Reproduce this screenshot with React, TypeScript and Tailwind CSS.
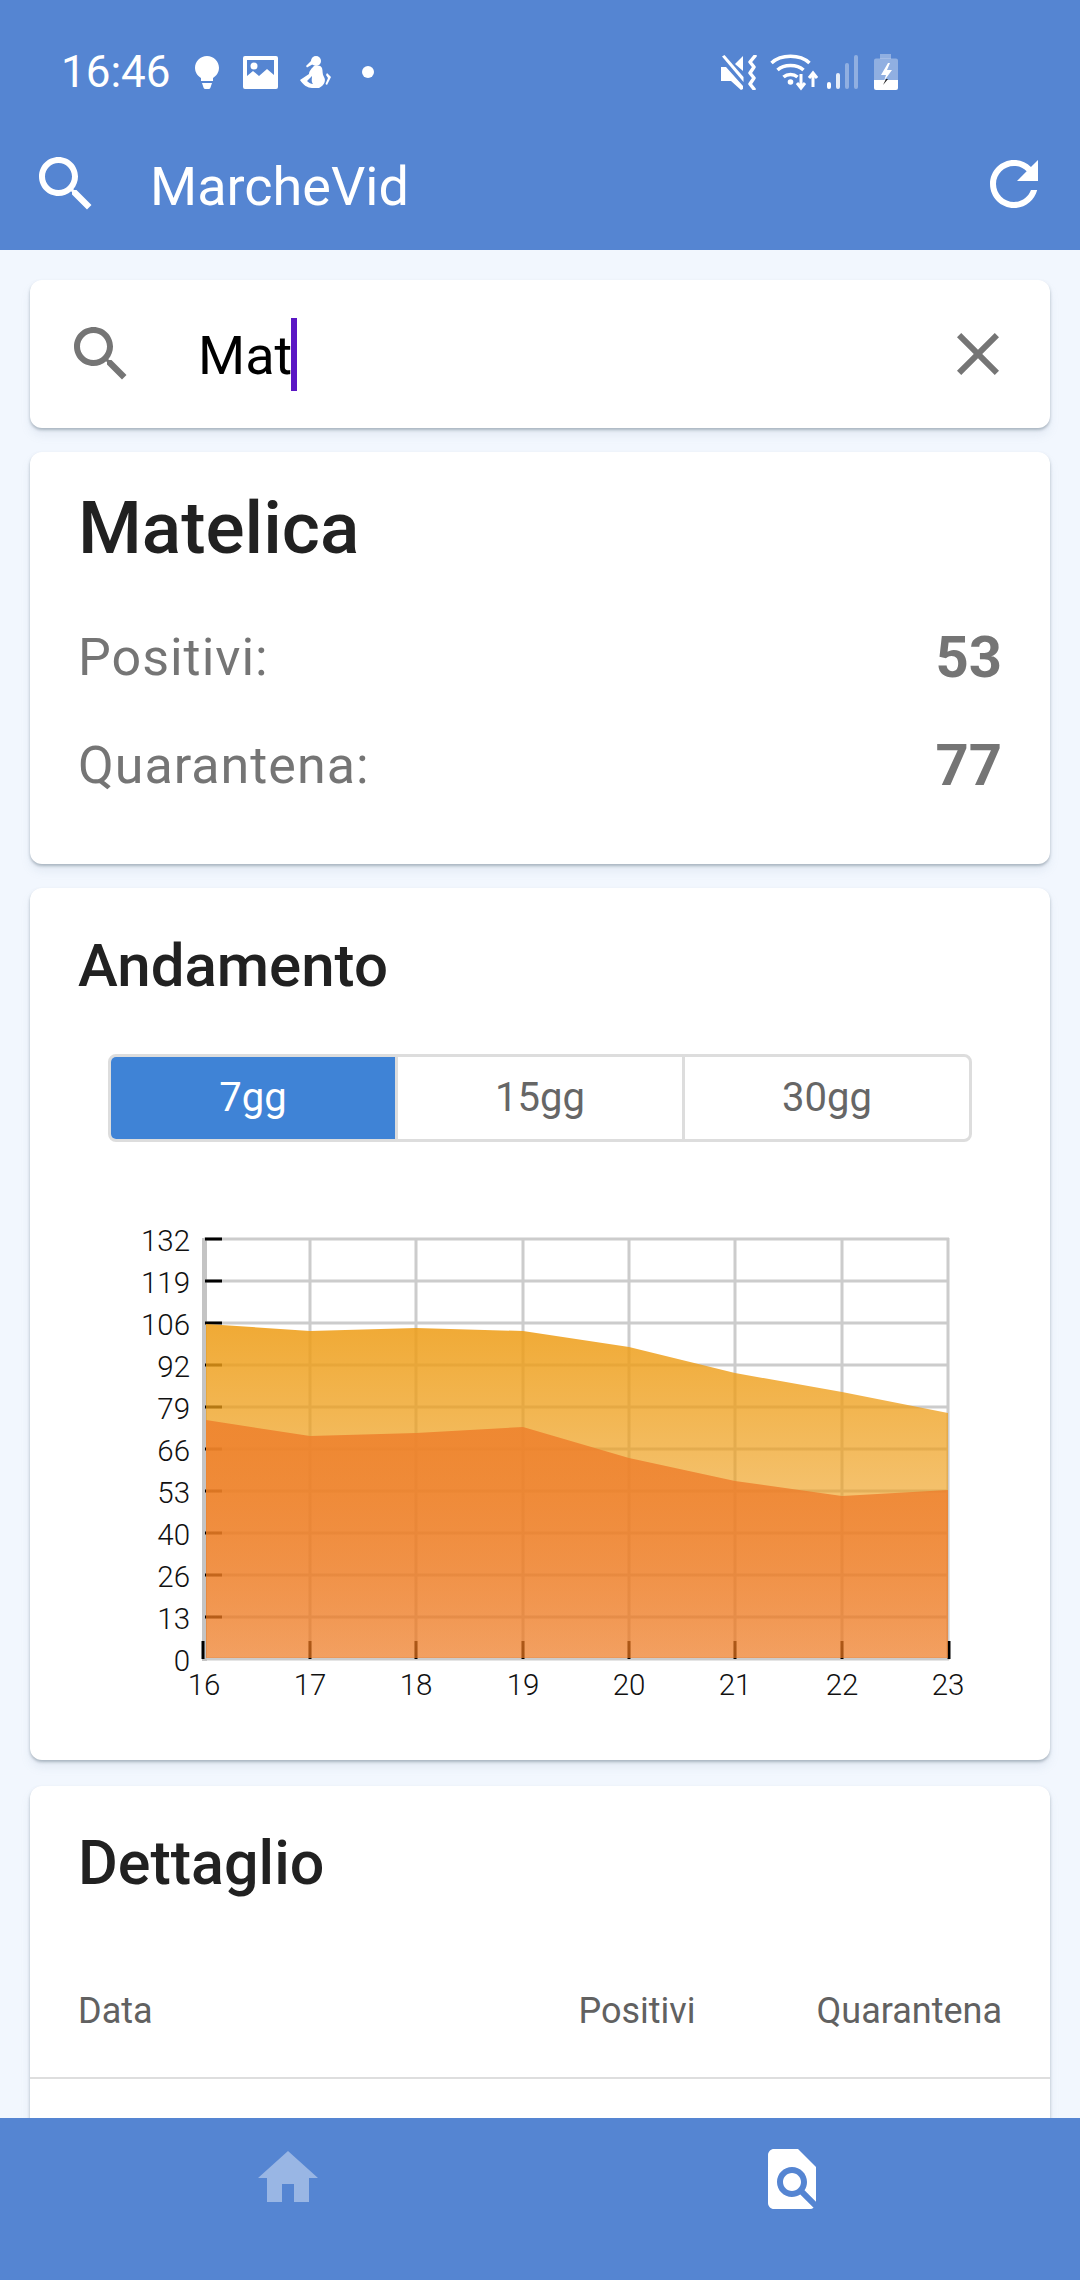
const SEARCH = "M15.5 14h-.79l-.28-.27C15.41 12.59 16 11.11 16 9.5 16 5.91 13.09 3 9.5 3S3 5.91 3 9.5 5.91 16 9.5 16c1.61 0 3.09-.59 4.23-1.57l.27.28v.79l5 4.99L20.49 19l-4.99-5zm-6 0C7.01 14 5 11.99 5 9.5S7.01 5 9.5 5 14 7.01 14 9.5 11.99 14 9.5 14z";
const REFRESH = "M17.65 6.35C16.2 4.9 14.21 4 12 4c-4.42 0-7.99 3.58-7.99 8s3.57 8 7.99 8c3.73 0 6.84-2.55 7.73-6h-2.08c-.82 2.33-3.04 4-5.65 4-3.31 0-6-2.69-6-6s2.69-6 6-6c1.66 0 3.14.69 4.22 1.78L13 11h7V4l-2.35 2.35z";
const CLOSE = "M19 6.41L17.59 5 12 10.59 6.41 5 5 6.41 10.59 12 5 17.59 6.41 19 12 13.41 17.59 19 19 17.59 13.41 12z";
const HOME = "M10 20v-6h4v6h5v-8h3L12 3 2 12h3v8z";
const FIND = "M20 19.59V8l-6-6H6c-1.1 0-1.99.9-1.99 2L4 20c0 1.1.89 2 1.99 2H18c.45 0 .85-.15 1.19-.4l-4.43-4.43c-.8.52-1.74.83-2.76.83-2.76 0-5-2.24-5-5s2.24-5 5-5 5 2.24 5 5c0 1.02-.31 1.96-.83 2.75L20 19.59zM9 13c0 1.66 1.34 3 3 3s3-1.34 3-3-1.34-3-3-3-3 1.34-3 3z";

function Icon({ d, className }: { d: string; className: string }) {
  return (
    <svg viewBox="0 0 24 24" className={className} fill="currentColor">
      <path d={d} />
    </svg>
  );
}

function Bulb() {
  return (
    <svg viewBox="0 0 24 33" className="w-[24px] h-[33px]" fill="#fff">
      <path d="M12 0C5.4 0 0 5.200 0 11.800c0 4.400 2.400 8 6 10.200V25h12v-3c3.600-2.200 6-5.800 6-10.200C24 5.200 18.600 0 12 0z" />
      <path d="M7 27h10l-1.500 4.500c-.4 1-1.200 1.500-2.200 1.500h-2.600c-1 0-1.800-.5-2.200-1.500z" />
    </svg>
  );
}

function Picture() {
  return (
    <svg viewBox="0 0 35 33" className="w-[35px] h-[33px]">
      <path
        fillRule="evenodd"
        fill="#fff"
        d="M2 0h31a2 2 0 0 1 2 2v29a2 2 0 0 1-2 2H2a2 2 0 0 1-2-2V2a2 2 0 0 1 2-2zM4 4v16l6-5 6 5 8-7 7 6V4z"
      />
      <circle cx="11" cy="10" r="3.500" fill="#fff" />
    </svg>
  );
}

function Runner() {
  return (
    <svg viewBox="0 0 31 34" className="w-[31px] h-[34px]" fill="#fff">
      <circle cx="16" cy="6" r="5" />
      <path d="M12 5L6 11l1 1.500 7-4z" />
      <path
        fillRule="evenodd"
        d="M14 11c3-1 7-1 8 2 1 3 0 6 2 9 2 3 1 8-5 11h-7c-4 0-9-3-12-8l9-6c0-3 3-6 5-8zM12 21l-5 5c2 2 4 3 6 3-2-3-1-5-1-8z"
      />
      <path d="M27 18l4 4-4 8-1.500-1 2.500-6-2-3z" />
    </svg>
  );
}

function Mute() {
  return (
    <svg viewBox="0 0 37 35" className="w-[37px] h-[35px]" fill="#fff">
      <path d="M0 12h5l17 19v3l-2 1-10-9H0z" />
      <path d="M1 1.500L3.500 0l19 22v5z" />
      <path d="M14 9l8-8v15z" />
      <path d="M34 1l-5 6 4 5-4 6 4 5-4 6 4 5" fill="none" stroke="#fff" strokeWidth="3.500" strokeLinecap="round" strokeLinejoin="round" />
    </svg>
  );
}

function Wifi() {
  return (
    <svg viewBox="0 0 48 37" className="w-[48px] h-[37px]" fill="none" stroke="#fff">
      <path d="M1.500 9C11 0 30 0 39.500 9" strokeWidth="3.500" />
      <path d="M7.500 16C14 10 27 10 33.500 16" strokeWidth="3.500" />
      <path d="M13.500 23c4-3.500 10-3.500 14 0" strokeWidth="3.500" />
      <circle cx="20.500" cy="28" r="2.800" fill="#fff" stroke="none" />
      <path d="M31 20v13M27 29l4 5 4-5" strokeWidth="3" />
      <path d="M43 33V20M39 24l4-5 4 5" strokeWidth="3" />
    </svg>
  );
}

function Signal() {
  return (
    <svg viewBox="0 0 31 34" className="w-[31px] h-[34px]">
      <rect x="0" y="27" width="4" height="7" rx="2" fill="#fff" />
      <rect x="9" y="18" width="4" height="16" rx="2" fill="#fff" fillOpacity="0.85" />
      <rect x="18" y="8" width="4" height="26" rx="2" fill="#fff" fillOpacity="0.35" />
      <rect x="27" y="0" width="4" height="34" rx="2" fill="#fff" fillOpacity="0.35" />
    </svg>
  );
}

function Battery() {
  return (
    <svg viewBox="0 0 24 36" className="w-[24px] h-[36px]">
      <path d="M6 0h11v5H6z" fill="#fff" fillOpacity="0.35" />
      <path d="M2 4.500h20a2 2 0 0 1 2 2V26H0V6.500a2 2 0 0 1 2-2z" fill="#fff" fillOpacity="0.35" />
      <path d="M0 26h24v8a2 2 0 0 1-2 2H2a2 2 0 0 1-2-2z" fill="#fff" />
      <path d="M14 9l-7 12h5l-2 6 8-11h-5l3-7z" fill="#fff" />
      <path d="M12 25l-3 6 5-6z" fill="#1b1b1b" />
    </svg>
  );
}

const xs = [204, 310, 416, 523, 629, 735, 842, 948];
const ys = [1239, 1281, 1323, 1365, 1407, 1449, 1491, 1533, 1575, 1617, 1659];
const yLabels = ["132", "119", "106", "92", "79", "66", "53", "40", "26", "13", "0"];
const upper = [1324, 1331, 1328, 1331, 1347, 1373, 1392, 1413];
const lower = [1420, 1436, 1433, 1427, 1458, 1481, 1496, 1490];

function areaPath(values: number[]) {
  const top = values.map((y, i) => `${i === 0 ? 206 : xs[i]},${y}`).join(" ");
  return `206,1658 ${top} 948,1658`;
}

function Chart() {
  return (
    <svg viewBox="30 1200 1020 520" className="w-[1020px] h-[520px] block">
      <defs>
        <linearGradient id="upperFill" gradientUnits="userSpaceOnUse" x1="0" y1="1239" x2="0" y2="1659">
          <stop offset="0" stopColor="rgb(238,158,25)" stopOpacity="1" />
          <stop offset="1" stopColor="rgb(238,158,25)" stopOpacity="0.4" />
        </linearGradient>
        <linearGradient id="lowerFill" gradientUnits="userSpaceOnUse" x1="0" y1="1420" x2="0" y2="1659">
          <stop offset="0" stopColor="rgb(238,130,45)" stopOpacity="0.88" />
          <stop offset="1" stopColor="rgb(237,104,32)" stopOpacity="0.5" />
        </linearGradient>
      </defs>
      {ys.map((y) => (
        <line key={y} x1="204" x2="949" y1={y} y2={y} stroke="#cccccc" strokeWidth="3" />
      ))}
      {xs.slice(1).map((x) => (
        <line key={x} x1={x} x2={x} y1="1238" y2="1660" stroke="#cccccc" strokeWidth="3" />
      ))}
      <line x1="204.500" x2="204.500" y1="1238" y2="1661" stroke="#c4c4c4" strokeWidth="5" />
      {ys.slice(0, -1).map((y) => (
        <line key={y} x1="205" x2="222" y1={y} y2={y} stroke="#000" strokeWidth="3" />
      ))}
      {xs.map((x) => (
        <line key={x} x1={x === 204 ? 203 : x === 948 ? 949 : x} x2={x === 204 ? 203 : x === 948 ? 949 : x} y1="1641" y2="1659" stroke="#000" strokeWidth="3" />
      ))}
      <polygon points={areaPath(upper)} fill="url(#upperFill)" />
      <polygon points={areaPath(lower)} fill="url(#lowerFill)" />
      <g fontFamily="Roboto" fontWeight="300" fontSize="29.500" fill="#111">
        {yLabels.map((t, i) => (
          <text key={t} x="190" y={ys[i] + 12} textAnchor="end">
            {t}
          </text>
        ))}
        {xs.map((x, i) => (
          <text key={x} x={x} y="1695" textAnchor="middle">
            {16 + i}
          </text>
        ))}
      </g>
    </svg>
  );
}

function Card({ className, children }: { className: string; children: React.ReactNode }) {
  return (
    <section className={`bg-white rounded-[12px] shrink-0 shadow-[0_2px_3px_rgba(110,125,140,0.5),0_7px_10px_rgba(150,170,190,0.15)] ${className}`}>
      {children}
    </section>
  );
}

export default function App() {
  return (
    <div className="w-[1080px] h-[2280px] overflow-hidden flex flex-col bg-[#f2f7fe] font-['Roboto',sans-serif]">
      <header className="h-[250px] shrink-0 bg-[#5585d2] text-white">
        <div className="h-[112px] pt-[32px] flex items-center pl-[61px] pr-[182px]">
          <span className="text-[44px] leading-none">16:46</span>
          <span className="ml-[24px] flex"><Bulb /></span>
          <span className="ml-[24px] flex"><Picture /></span>
          <span className="ml-[22px] flex"><Runner /></span>
          <span className="ml-[31px] w-[12px] h-[12px] rounded-full bg-white" />
          <div className="ml-auto flex items-center">
            <Mute />
            <span className="ml-[12px] flex"><Wifi /></span>
            <span className="ml-[9px] flex"><Signal /></span>
            <span className="ml-[16px] flex"><Battery /></span>
          </div>
        </div>
        <div className="h-[138px] pt-[36px] px-[30px] flex items-start">
          <Icon d={SEARCH} className="w-[72px] h-[72px]" />
          <h1 className="ml-[48px] text-[54px] leading-[78px] font-normal">MarcheVid</h1>
          <Icon d={REFRESH} className="ml-auto w-[72px] h-[72px]" />
        </div>
      </header>

      <main className="flex-1 min-h-0 overflow-hidden px-[30px] pt-[30px] flex flex-col">
        <Card className="h-[148px] flex items-center pl-[35px] pr-[36px]">
          <Icon d={SEARCH} className="w-[72px] h-[72px] text-[#757575]" />
          <div className="ml-[61px] flex items-center">
            <span className="text-[54px] leading-none text-black pt-[3px]">Mat</span>
            <span className="w-[6px] h-[73px] bg-[#5a17c4] -ml-[1px]" />
          </div>
          <Icon d={CLOSE} className="ml-auto w-[72px] h-[72px] text-[#757575]" />
        </Card>

        <Card className="mt-[24px] h-[412px] px-[48px] pt-[34px]">
          <h2 className="text-[73px] leading-[84px] font-medium text-[#212121]">Matelica</h2>
          <div className="mt-[34px] flex items-center justify-between h-[107px] text-[#757575]">
            <span className="text-[52px] font-normal tracking-[1px]">Positivi:</span>
            <span className="text-[58px] font-bold">53</span>
          </div>
          <div className="flex items-center justify-between h-[108px] pt-[1px] text-[#757575]">
            <span className="text-[52px] font-normal tracking-[1px]">Quarantena:</span>
            <span className="text-[58px] font-bold">77</span>
          </div>
        </Card>

        <Card className="mt-[24px] h-[872px]">
          <h2 className="pl-[48px] pt-[44px] text-[60px] leading-[68px] font-medium text-[#212121]">Andamento</h2>
          <div className="mt-[54px] mx-[78px] h-[88px] flex rounded-[8px] border-[3px] border-[#dddddd] overflow-hidden">
            <div className="flex-1 bg-[#3f83d6] text-white text-[40px] flex items-center justify-center">7gg</div>
            <div className="flex-1 border-l-[3px] border-[#dddddd] text-[#666666] text-[40px] flex items-center justify-center">15gg</div>
            <div className="flex-1 border-l-[3px] border-[#dddddd] text-[#666666] text-[40px] flex items-center justify-center">30gg</div>
          </div>
          <div className="mt-[58px]">
            <Chart />
          </div>
        </Card>

        <Card className="mt-[26px] h-[500px]">
          <h2 className="pl-[48px] pt-[43px] text-[61px] leading-[68px] font-medium text-[#212121]">Dettaglio</h2>
          <div className="mt-[61px] px-[48px] h-[121px] pb-[14px] flex items-center text-[36px] font-normal text-[#616161] border-b-[2px] border-[#dedede]">
            <span>Data</span>
            <span className="ml-auto">Positivi</span>
            <span className="ml-[121px]">Quarantena</span>
          </div>
        </Card>
      </main>

      <nav className="h-[162px] shrink-0 bg-[#5585d2] flex px-[36px]">
        <div className="flex-1 flex justify-center pt-[24px]">
          <Icon d={HOME} className="w-[72px] h-[72px] text-white/40" />
        </div>
        <div className="flex-1 flex justify-center pt-[25px]">
          <Icon d={FIND} className="w-[72px] h-[72px] text-white" />
        </div>
      </nav>
    </div>
  );
}
